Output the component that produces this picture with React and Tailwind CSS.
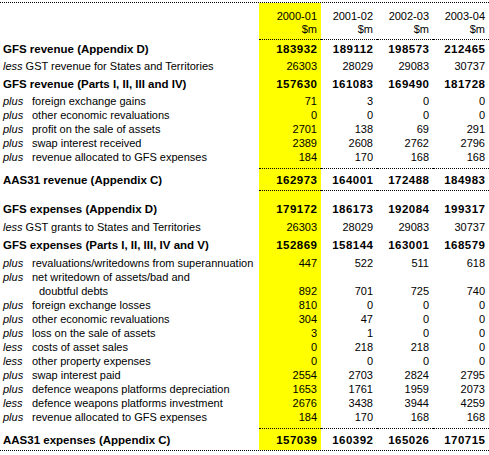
const cols = "grid grid-cols-[259px_62px_56px_56px_56px]";
const yellow = "bg-[#ffff00]";

function Row({ h, label, vals = [], bold = false }) {
  return (
    <div
      className={`${cols} ${h} leading-[14px] ${
        bold ? "font-bold text-[11.5px]" : "text-[11px]"
      }`}
    >
      <div className="flex items-center whitespace-nowrap pl-[3px]">{label}</div>
      {[0, 1, 2, 3].map((i) => (
        <div
          key={i}
          className={`flex items-center justify-end ${
            bold ? "tracking-[0.5px] pr-[3.5px]" : "pr-[4px]"
          } ${i === 0 ? yellow : ""}`}
        >
          {vals[i]}
        </div>
      ))}
    </div>
  );
}

function Gap({ h }) {
  return (
    <div className={`${cols} ${h}`}>
      <div />
      <div className={yellow} />
      <div />
      <div />
      <div />
    </div>
  );
}

function Rule() {
  return (
    <div className={cols}>
      <div />
      <div className={`h-px border-t border-dotted border-black ${yellow}`} />
      <div className="h-px border-t border-dotted border-black" />
      <div className="h-px border-t border-dotted border-black" />
      <div className="h-px border-t border-dotted border-black" />
    </div>
  );
}

function Pre({ word, children, indent = false }) {
  return (
    <>
      <span className="inline-block w-[29px] italic">{word}</span>
      <span className={indent ? "pl-[7px]" : ""}>{children}</span>
    </>
  );
}

const revenueAdj = [
  ["plus", "foreign exchange gains", ["71", "3", "0", "0"]],
  ["plus", "other economic revaluations", ["0", "0", "0", "0"]],
  ["plus", "profit on the sale of assets", ["2701", "138", "69", "291"]],
  ["plus", "swap interest received", ["2389", "2608", "2762", "2796"]],
  ["plus", "revenue allocated to GFS expenses", ["184", "170", "168", "168"]],
];

const expenseAdj = [
  ["plus", "revaluations/writedowns from superannuation", ["447", "522", "511", "618"]],
  ["plus", "net writedown of assets/bad and", []],
  ["", "doubtful debts", ["892", "701", "725", "740"], true],
  ["plus", "foreign exchange losses", ["810", "0", "0", "0"]],
  ["plus", "other economic revaluations", ["304", "47", "0", "0"]],
  ["plus", "loss on the sale of assets", ["3", "1", "0", "0"]],
  ["less", "costs of asset sales", ["0", "218", "218", "0"]],
  ["less", "other property expenses", ["0", "0", "0", "0"]],
  ["plus", "swap interest paid", ["2554", "2703", "2824", "2795"]],
  ["plus", "defence weapons platforms depreciation", ["1653", "1761", "1959", "2073"]],
  ["less", "defence weapons platforms investment", ["2676", "3438", "3944", "4259"]],
  ["plus", "revenue allocated to GFS expenses", ["184", "170", "168", "168"]],
];

export default function App() {
  return (
    <div
      className="w-[489px] h-[455px] bg-white text-black pt-[2px]"
      style={{ fontFamily: '"Liberation Sans", Arial, sans-serif' }}
    >
      <div className="border-t border-dotted border-black" />

      {/* column headings */}
      <div className={`${cols} h-[36px] text-[11px] leading-[13px]`}>
        <div />
        {["2000-01", "2001-02", "2002-03", "2003-04"].map((y, i) => (
          <div
            key={y}
            className={`flex flex-col items-end pt-[7px] pr-[4px] ${i === 0 ? yellow : ""}`}
          >
            <span>{y}</span>
            <span>$m</span>
          </div>
        ))}
      </div>
      <Rule />

      {/* revenue */}
      <Row h="h-[17px]" bold label="GFS revenue (Appendix D)" vals={["183932", "189112", "198573", "212465"]} />
      <Row
        h="h-[18px]"
        label={
          <span>
            <i>less</i> GST revenue for States and Territories
          </span>
        }
        vals={["26303", "28029", "29083", "30737"]}
      />
      <Row h="h-[17px]" bold label="GFS revenue (Parts I, II, III and IV)" vals={["157630", "161083", "169490", "181728"]} />
      <Gap h="h-[2px]" />
      {revenueAdj.map(([w, t, v]) => (
        <Row key={t} h="h-[14px]" label={<Pre word={w}>{t}</Pre>} vals={v} />
      ))}
      <Gap h="h-[4px]" />
      <Rule />
      <Row h="h-[21px]" bold label="AAS31 revenue (Appendix C)" vals={["162973", "164001", "172488", "184983"]} />
      <Rule />

      {/* expenses */}
      <Gap h="h-[9px]" />
      <Row h="h-[18px]" bold label="GFS expenses (Appendix D)" vals={["179172", "186173", "192084", "199317"]} />
      <Row
        h="h-[18px]"
        label={
          <span>
            <i>less</i> GST grants to States and Territories
          </span>
        }
        vals={["26303", "28029", "29083", "30737"]}
      />
      <Row h="h-[18px]" bold label="GFS expenses (Parts I, II, III, IV and V)" vals={["152869", "158144", "163001", "168579"]} />
      <Gap h="h-[2px]" />
      {expenseAdj.map(([w, t, v, indent]) => (
        <Row
          key={t}
          h="h-[14px]"
          label={
            <Pre word={w} indent={indent}>
              {t}
            </Pre>
          }
          vals={v}
        />
      ))}
      <Gap h="h-[4px]" />
      <Rule />
      <Row h="h-[21px]" bold label="AAS31 expenses (Appendix C)" vals={["157039", "160392", "165026", "170715"]} />
      <div className="border-t border-dotted border-black" />
    </div>
  );
}
